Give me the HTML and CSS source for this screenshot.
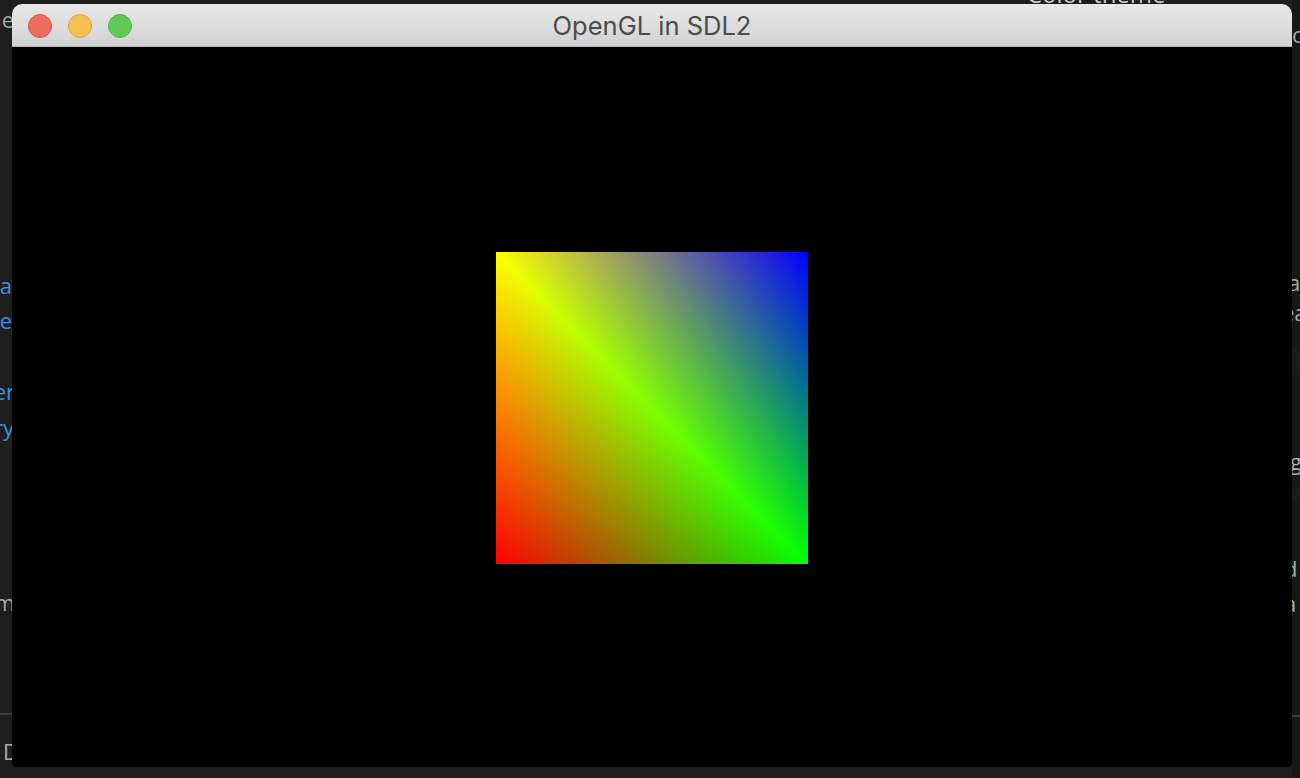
FILE: index.html
```html
<!DOCTYPE html>
<html>
<head>
<meta charset="utf-8">
<title>OpenGL in SDL2</title>
<link rel="stylesheet" href="styles.css">
</head>
<body>
<div class="desktop">
  <aside class="side side-left">
    <div class="ln gray l1">Theme</div>
    <div class="ln blue l2">Java</div>
    <div class="ln blue l3">Rule</div>
    <div class="ln blue l4">Manager</div>
    <div class="ln blue l5">Library</div>
    <div class="ln gray l6">Program</div>
    <div class="rule r-left"></div>
    <div class="ln gray l7">D</div>
  </aside>
  <main class="middle">
    <div class="topline">Color theme</div>
  </main>
  <aside class="side side-right">
    <div class="ln gray c1">c</div>
    <div class="ln gray c2">a</div>
    <div class="ln gray c3">ea</div>
    <div class="band b1"></div>
    <div class="ln gray c4">g</div>
    <div class="band b2"></div>
    <div class="ln gray c5">d</div>
    <div class="ln gray c6">a</div>
    <div class="rule r-right"></div>
  </aside>
</div>

<div class="window">
  <header class="titlebar">
    <div class="lights">
      <span class="light red"></span>
      <span class="light yellow"></span>
      <span class="light green"></span>
    </div>
    <div class="title">OpenGL in SDL2</div>
  </header>
  <section class="viewport">
    <div class="quad"></div>
  </section>
</div>
</body>
</html>
```

FILE: styles.css
```css
html, body {
  margin: 0;
  padding: 0;
  width: 1300px;
  height: 778px;
  overflow: hidden;
  background: #1e1e1e;
  font-family: "Open Sans", "Noto Sans", sans-serif;
}

.desktop {
  display: grid;
  grid-template-columns: 12px 1fr 8px;
  width: 1300px;
  height: 778px;
}

.side {
  display: flex;
  flex-direction: column;
  overflow: hidden;
  font-size: 22px;
  line-height: 30px;
}

.side-left {
  background: #1e1e1e;
  align-items: flex-end;
}

.side-right {
  background: #171717;
  align-items: flex-start;
}

.ln {
  white-space: nowrap;
  height: 30px;
  flex: none;
}

.gray { color: #a9a9a9; }
.blue { color: #3b8eea; }

.l1 { margin-top: 4px; margin-right: -2px; }
.l2 { margin-top: 236px; }
.l3 { margin-top: 5px; }
.l4 { margin-top: 41px; margin-right: -3px; }
.l5 { margin-top: 6px; margin-right: -2px; }
.l6 { margin-top: 145px; margin-right: -3px; }
.r-left { margin-top: 96px; }
.l7 { margin-top: 21px; align-self: flex-start; margin-left: 3px; }

.rule {
  height: 2px;
  width: 100%;
  background: #3c3c3c;
  flex: none;
}

.c1 { margin-top: 19px; }
.c2 { margin-top: 218px; margin-left: -4px; }
.c3 { margin-top: 0px; margin-left: -10px; }
.band { height: 26px; width: 100%; background: #1b1b1b; flex: none; }
.b1 { margin-top: 22px; }
.c4 { margin-top: 71px; margin-left: -2px; }
.b2 { margin-top: 12px; height: 10px; }
.c5 { margin-top: 55px; margin-left: -8px; }
.c6 { margin-top: 5px; margin-left: -8px; }
.r-right { margin-top: 97px; }

.middle {
  background: #1e1e1e;
  overflow: hidden;
}

.topline {
  margin-top: -22px;
  padding-left: 1015px;
  font-size: 24px;
  line-height: 32px;
  color: #cccccc;
  white-space: nowrap;
}

/* window on the desktop */
.window {
  position: absolute;
  left: 12px;
  top: 4px;
  width: 1280px;
  height: 763px;
  display: flex;
  flex-direction: column;
  border-radius: 10px 10px 5px 5px;
  overflow: hidden;
  background: #000;
}

.titlebar {
  position: relative;
  flex: none;
  height: 42px;
  border-bottom: 1px solid #b4b4b4;
  background: linear-gradient(to bottom, #e8e8e8, #d2d2d2);
  display: flex;
  align-items: center;
  justify-content: center;
}

.lights {
  position: absolute;
  left: 16px;
  top: 10px;
  display: flex;
  gap: 16px;
}

.light {
  width: 22px;
  height: 22px;
  border-radius: 50%;
  border: 1px solid transparent;
}

.red { background: #ee6b60; border-color: #d85247; }
.yellow { background: #f6c14f; border-color: #dba43c; }
.green { background: #63c956; border-color: #52ad44; }

.title {
  font-family: "Inter", "Open Sans", sans-serif;
  font-size: 25.5px;
  color: #4b4b4b;
  line-height: 30px;
  margin-top: 2px;
}

.viewport {
  flex: 1;
  background: #000;
  display: flex;
  align-items: center;
  justify-content: center;
}

.quad {
  width: 312px;
  height: 312px;
  margin-top: 2px;
  background:
    linear-gradient(to right, #ff0000, #000000),
    linear-gradient(to top right, #000000, #00ff00 50%, #000000),
    linear-gradient(to top right, #000000 50%, #0000ff);
  background-blend-mode: screen;
}
```
